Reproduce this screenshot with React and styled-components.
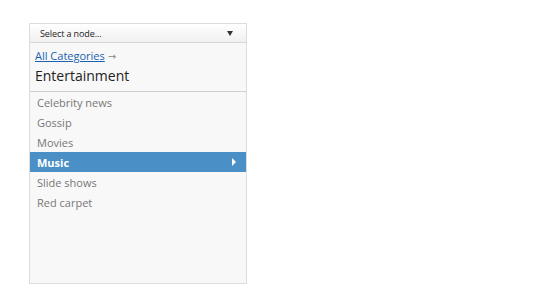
import React, { useState } from "react";
import styled, { createGlobalStyle } from "styled-components";

const GlobalStyle = createGlobalStyle`
  html, body {
    margin: 0;
    padding: 0;
    background: #ffffff;
  }
  body {
    font-family: "Open Sans", "DejaVu Sans", sans-serif;
  }
`;

/** page area */
const Page = styled.div`
  padding: 23px 0 0 29px;
`;

/** outer panel */
const Panel = styled.div`
  width: 216px;
  height: 259px;
  border: 1px solid #dcdcdc;
  background: #f8f8f8;
  display: flex;
  flex-direction: column;
`;

/** node select bar */
const SelectBar = styled.div`
  height: 18px;
  display: flex;
  align-items: center;
  justify-content: space-between;
  padding: 0 13px 0 10px;
  background: linear-gradient(#ffffff, #f0f0f0);
  border-bottom: 1px solid #d6d6d6;
  font-size: 9px;
  color: #222;
  letter-spacing: -0.1px;
`;

const Caret = styled.span`
  width: 0;
  height: 0;
  border-left: 3px solid transparent;
  border-right: 3px solid transparent;
  border-top: 5px solid #333;
`;

/** breadcrumb header */
const Header = styled.div`
  padding: 6px 6px 5px 5px;
  border-bottom: 1px solid #cfcfcf;
`;

const Crumb = styled.div`
  display: flex;
  align-items: center;
  gap: 3px;
  font-size: 11px;
  line-height: 14px;
`;

const CrumbLink = styled.a`
  color: #1a62b0;
  text-decoration: underline;
  cursor: pointer;
`;

const CrumbArrow = styled.span`
  color: #888;
  font-size: 10px;
`;

const Title = styled.div`
  margin-top: 3px;
  font-size: 14px;
  line-height: 20px;
  color: #222;
`;

/** category list */
const List = styled.ul`
  list-style: none;
  margin: 0;
  padding: 0;
`;

const Item = styled.li`
  height: 20px;
  display: flex;
  align-items: center;
  justify-content: space-between;
  padding: 0 10px 0 7px;
  font-size: 11px;
  color: ${(p) => (p.$active ? "#ffffff" : "#777")};
  font-weight: ${(p) => (p.$active ? 700 : 400)};
  background: ${(p) => (p.$active ? "#4a8fc6" : "transparent")};
  cursor: pointer;
`;

const ItemArrow = styled.span`
  width: 0;
  height: 0;
  border-top: 4px solid transparent;
  border-bottom: 4px solid transparent;
  border-left: 4px solid #fff;
`;

const items = ["Celebrity news", "Gossip", "Movies", "Music", "Slide shows", "Red carpet"];

export default function App() {
  const [active, setActive] = useState("Music");

  return (
    <>
      <GlobalStyle />
      <Page>
        <Panel>
          <SelectBar>
            <span>Select a node...</span>
            <Caret />
          </SelectBar>
          <Header>
            <Crumb>
              <CrumbLink>All Categories</CrumbLink>
              <CrumbArrow>→</CrumbArrow>
            </Crumb>
            <Title>Entertainment</Title>
          </Header>
          <List>
            {items.map((name) => (
              <Item key={name} $active={name === active} onClick={() => setActive(name)}>
                <span>{name}</span>
                {name === active && <ItemArrow />}
              </Item>
            ))}
          </List>
        </Panel>
      </Page>
    </>
  );
}
